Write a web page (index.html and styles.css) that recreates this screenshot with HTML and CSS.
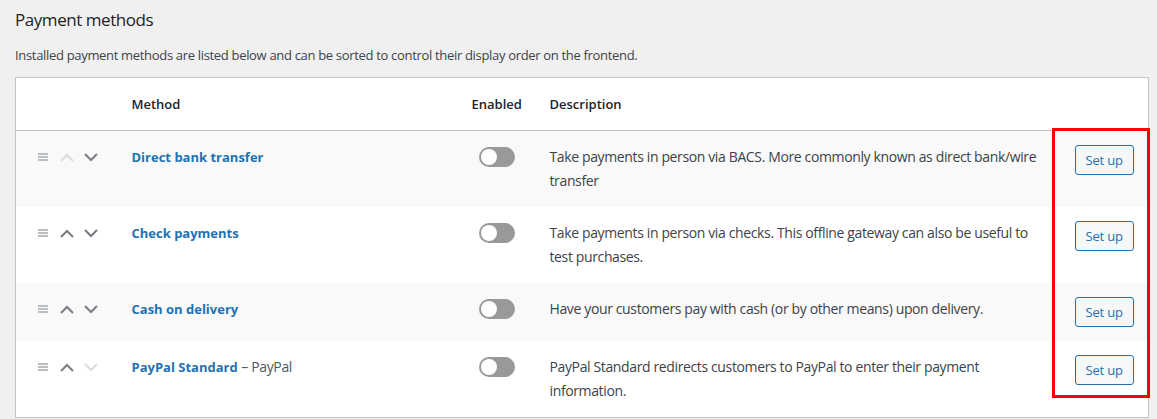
FILE: index.html
```html
<!DOCTYPE html>
<html lang="en">

<head>
    <meta charset="UTF-8">
    <meta name="viewport" content="width=device-width, initial-scale=1.0">
    <title>Payment methods</title>
    <link rel="stylesheet" href="styles.css">
</head>

<body>
    <div class="wrap">
        <h2 class="title">Payment methods</h2>
        <p class="intro">Installed payment methods are listed below and can be sorted to control their display order on the frontend.</p>

        <div class="table-box">
            <table class="gateways">
                <thead>
                    <tr>
                        <th class="col-sort"></th>
                        <th class="col-name">Method</th>
                        <th class="col-status">Enabled</th>
                        <th class="col-desc">Description</th>
                        <th class="col-action"></th>
                    </tr>
                </thead>
                <tbody>
                    <tr>
                        <td class="col-sort">
                            <div class="sort-tools">
                                <svg class="drag" width="10" height="8" viewBox="0 0 10 8"><path d="M0 1h10M0 4h10M0 7h10" /></svg>
                                <svg class="chev off" width="14" height="9" viewBox="0 0 14 9"><path d="M1 8l6-6 6 6" /></svg>
                                <svg class="chev" width="14" height="9" viewBox="0 0 14 9"><path d="M1 1l6 6 6-6" /></svg>
                            </div>
                        </td>
                        <td class="col-name"><a href="#">Direct bank transfer</a></td>
                        <td class="col-status"><span class="toggle"></span></td>
                        <td class="col-desc">Take payments in person via BACS. More commonly known as direct bank/wire transfer</td>
                        <td class="col-action"><button class="button">Set up</button></td>
                    </tr>
                    <tr>
                        <td class="col-sort">
                            <div class="sort-tools">
                                <svg class="drag" width="10" height="8" viewBox="0 0 10 8"><path d="M0 1h10M0 4h10M0 7h10" /></svg>
                                <svg class="chev" width="14" height="9" viewBox="0 0 14 9"><path d="M1 8l6-6 6 6" /></svg>
                                <svg class="chev" width="14" height="9" viewBox="0 0 14 9"><path d="M1 1l6 6 6-6" /></svg>
                            </div>
                        </td>
                        <td class="col-name"><a href="#">Check payments</a></td>
                        <td class="col-status"><span class="toggle"></span></td>
                        <td class="col-desc">Take payments in person via checks. This offline gateway can also be useful to test purchases.</td>
                        <td class="col-action"><button class="button">Set up</button></td>
                    </tr>
                    <tr>
                        <td class="col-sort">
                            <div class="sort-tools">
                                <svg class="drag" width="10" height="8" viewBox="0 0 10 8"><path d="M0 1h10M0 4h10M0 7h10" /></svg>
                                <svg class="chev" width="14" height="9" viewBox="0 0 14 9"><path d="M1 8l6-6 6 6" /></svg>
                                <svg class="chev" width="14" height="9" viewBox="0 0 14 9"><path d="M1 1l6 6 6-6" /></svg>
                            </div>
                        </td>
                        <td class="col-name"><a href="#">Cash on delivery</a></td>
                        <td class="col-status"><span class="toggle"></span></td>
                        <td class="col-desc">Have your customers pay with cash (or by other means) upon delivery.</td>
                        <td class="col-action"><button class="button">Set up</button></td>
                    </tr>
                    <tr>
                        <td class="col-sort">
                            <div class="sort-tools">
                                <svg class="drag" width="10" height="8" viewBox="0 0 10 8"><path d="M0 1h10M0 4h10M0 7h10" /></svg>
                                <svg class="chev" width="14" height="9" viewBox="0 0 14 9"><path d="M1 8l6-6 6 6" /></svg>
                                <svg class="chev off" width="14" height="9" viewBox="0 0 14 9"><path d="M1 1l6 6 6-6" /></svg>
                            </div>
                        </td>
                        <td class="col-name"><a href="#">PayPal Standard</a> <span class="sub">&ndash; PayPal</span></td>
                        <td class="col-status"><span class="toggle"></span></td>
                        <td class="col-desc">PayPal Standard redirects customers to PayPal to enter their payment information.</td>
                        <td class="col-action"><button class="button">Set up</button></td>
                    </tr>
                </tbody>
            </table>

            <!-- marcação vermelha em volta dos botões -->
            <div class="highlight"></div>
        </div>
    </div>
</body>

</html>
```

FILE: styles.css
```css
/* Estilo global */
body {
    margin: 0;
    background-color: #f0f0f1;
    font-family: "Open Sans", "Noto Sans", sans-serif;
    font-size: 13px;
    color: #3c434a;
}

.wrap {
    display: flex;
    flex-direction: column;
    padding: 9px 9px 0 15px;
}

.title {
    margin: 0;
    font-size: 17px;
    font-weight: 400;
    line-height: 22px;
    letter-spacing: -0.45px;
    color: #1d2327;
}

.intro {
    margin: 15px 0 13px;
    line-height: 18px;
    letter-spacing: -0.32px;
}

/* tabela */
.table-box {
    position: relative;
    width: 1134px;
}

.gateways {
    width: 100%;
    border-collapse: collapse;
    table-layout: fixed;
    background-color: #fff;
    border: 1px solid #c3c4c7;
}

.gateways th,
.gateways td {
    box-sizing: border-box;
    padding: 14px;
    font-size: 14px;
    line-height: 24px;
    text-align: left;
    vertical-align: top;
}

.gateways th {
    font-size: 13px;
    font-weight: 600;
    color: #1d2327;
    border-bottom: 1px solid #c3c4c7;
}

.gateways tbody tr:nth-child(odd) {
    background-color: #f9f9f9;
}

.gateways .col-sort {
    width: 102px;
    padding-left: 22px;
}

.gateways .col-name {
    width: 340px;
}

.gateways .col-status {
    width: 78px;
    text-align: center;
}

.gateways .col-desc {
    letter-spacing: -0.37px;
}

.gateways th.col-desc {
    letter-spacing: 0;
}

.gateways .col-action {
    width: 88px;
    padding-right: 15px;
    text-align: right;
}

/* ícones de ordenação */
.sort-tools {
    display: flex;
    align-items: center;
    gap: 10px;
    height: 24px;
}

.sort-tools svg {
    display: block;
    fill: none;
}

.sort-tools .drag {
    margin-right: 2px;
}

.drag path {
    stroke: #a7aaad;
    stroke-width: 1.5;
}

.chev path {
    stroke: #787c82;
    stroke-width: 2;
}

.chev.off path {
    stroke: #dcdcde;
}

/* nome do método */
.col-name a {
    font-size: 13px;
    color: #2271b1;
    font-weight: 700;
    text-decoration: none;
}

.col-name .sub {
    color: #50575e;
    letter-spacing: -0.37px;
}

/* interruptor */
.toggle {
    display: inline-block;
    position: relative;
    width: 36px;
    height: 20px;
    margin-top: 2px;
    border-radius: 10px;
    background-color: #999;
    vertical-align: top;
}

.toggle::after {
    content: "";
    position: absolute;
    top: 2px;
    left: 2px;
    width: 16px;
    height: 16px;
    border-radius: 50%;
    background-color: #fff;
}

/* botão */
.button {
    height: 30px;
    padding: 0 10px;
    font-family: inherit;
    font-size: 13px;
    line-height: 28px;
    letter-spacing: -0.2px;
    white-space: nowrap;
    color: #2271b1;
    background-color: #f6f7f7;
    border: 1px solid #2271b1;
    border-radius: 3px;
    cursor: pointer;
}

.highlight {
    position: absolute;
    left: 1037px;
    top: 51px;
    width: 98px;
    height: 270px;
    box-sizing: border-box;
    border: 3px solid #ff0000;
}
```
